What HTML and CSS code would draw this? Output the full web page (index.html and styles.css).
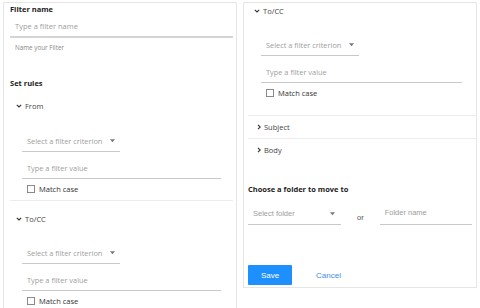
FILE: index.html
```html
<!DOCTYPE html>
<html>
<head>
<meta charset="utf-8">
<link rel="stylesheet" href="styles.css">
</head>
<body>
<div class="page">
  <section class="panel left">
    <div class="heading">Filter name</div>
    <div class="field name-field"><span class="ph">Type a filter name</span></div>
    <div class="hint">Name your Filter</div>
    <div class="heading rules">Set rules</div>

    <div class="rule from">
      <div class="rule-head"><svg class="chev" viewBox="0 0 6 6"><polyline points="0.8,1.8 3,4 5.2,1.8"/></svg><span>From</span></div>
      <div class="rule-body">
        <div class="field select"><span class="ph">Select a filter criterion</span><svg class="tri" viewBox="0 0 6 4"><polygon points="0,0 6,0 3,3.5"/></svg></div>
        <div class="field value"><span class="ph">Type a filter value</span></div>
        <label class="check"><span class="box"></span><span>Match case</span></label>
      </div>
    </div>

    <div class="rule tocc">
      <div class="rule-head"><svg class="chev" viewBox="0 0 6 6"><polyline points="0.8,1.8 3,4 5.2,1.8"/></svg><span>To/CC</span></div>
      <div class="rule-body">
        <div class="field select"><span class="ph">Select a filter criterion</span><svg class="tri" viewBox="0 0 6 4"><polygon points="0,0 6,0 3,3.5"/></svg></div>
        <div class="field value"><span class="ph">Type a filter value</span></div>
        <label class="check"><span class="box"></span><span>Match case</span></label>
      </div>
    </div>
  </section>

  <section class="panel right">
    <div class="rule top">
      <div class="rule-head"><svg class="chev" viewBox="0 0 6 6"><polyline points="0.8,1.8 3,4 5.2,1.8"/></svg><span>To/CC</span></div>
      <div class="rule-body">
        <div class="field select"><span class="ph">Select a filter criterion</span><svg class="tri" viewBox="0 0 6 4"><polygon points="0,0 6,0 3,3.5"/></svg></div>
        <div class="field value"><span class="ph">Type a filter value</span></div>
        <label class="check"><span class="box"></span><span>Match case</span></label>
      </div>
    </div>
    <div class="collapsed"><svg class="chev" viewBox="0 0 6 6"><polyline points="2,0.8 4.2,3 2,5.2"/></svg><span>Subject</span></div>
    <div class="collapsed"><svg class="chev" viewBox="0 0 6 6"><polyline points="2,0.8 4.2,3 2,5.2"/></svg><span>Body</span></div>

    <div class="heading folder-title">Choose a folder to move to</div>
    <div class="folder-row">
      <div class="field folder-select"><span class="ph">Select folder</span><svg class="tri" viewBox="0 0 6 4"><polygon points="0,0 6,0 3,3.5"/></svg></div>
      <span class="or">or</span>
      <div class="field folder-name"><span class="ph">Folder name</span></div>
    </div>
    <div class="actions">
      <button class="save">Save</button>
      <button class="cancel">Cancel</button>
    </div>
  </section>
</div>
</body>
</html>
```
FILE: styles.css
```css
* { box-sizing: border-box; }
html, body { margin: 0; padding: 0; background: #fff; }
body {
  font-family: "Open Sans", "Noto Sans", sans-serif;
  font-size: 7.5px;
  color: #333;
  overflow: hidden;
  height: 308px;
  white-space: nowrap;
}
.page {
  display: flex;
  align-items: flex-start;
  padding: 2px 0 0 3px;
  gap: 6px;
}
.panel {
  border: 1px solid #e6e6e6;
  background: #fff;
}
.left {
  width: 234px;
  height: 320px;
  padding: 0 3px 0 6px;
}
.right {
  width: 234px;
  height: 286px;
  padding: 0 0 0 4px;
}
.heading {
  font-weight: 700;
  font-size: 7.5px;
  line-height: 12px;
  color: #222;
}
.field {
  display: flex;
  align-items: center;
  line-height: 12px;
  border-bottom: 1px solid #c9c9c9;
  padding: 0 0 4px 5px;
}
.ph { color: #9e9e9e; font-size: 7.4px; }
.name-field { margin-top: 5px; padding-bottom: 4px; border-bottom: 2px solid #d4d4d4; }
.name-field .ph { font-size: 7.5px; }
.hint { margin-top: 5px; font-size: 6.3px; line-height: 10px; color: #888; padding-left: 5px; }
.rules { margin-top: 24px; }

.rule-head, .collapsed {
  display: flex;
  align-items: center;
  line-height: 12px;
  color: #444;
  font-size: 7.5px;
}
.rule-head { padding-left: 6px; }
.chev {
  width: 6px; height: 6px;
  margin-right: 3px;
  fill: none; stroke: #333; stroke-width: 1.1;
}
.rule-body { padding-left: 12px; }
.select { width: 98px; margin-top: 23px; }
.tri { width: 5px; height: 4px; fill: #777; margin-left: 8px; }
.value { width: 199px; margin-top: 10px; }
.check {
  display: flex;
  align-items: center;
  margin-top: 4px;
  padding-left: 5px;
  line-height: 12px;
  color: #333;
}
.box {
  width: 8px; height: 8px;
  border: 1px solid #8a8a8a;
  margin-right: 4px;
  background: #fff;
}
.from .rule-head { margin-top: 11px; }
.from .check { padding-bottom: 5px; }
.tocc { border-top: 1px solid #ececec; }
.tocc .rule-head { margin-top: 12px; }
.tocc .select { margin-top: 22px; }

.right .rule-head { margin-top: 2px; padding-left: 6px; }
.right .select { margin-top: 22px; }
.right .value { width: 201px; }
.right .rule-body { padding-left: 13px; }
.right .top .check { padding-bottom: 16px; }
.collapsed {
  border-top: 1px solid #ececec;
  padding: 5px 0 5px 8px;
}
.collapsed .chev { margin-right: 2px; }
.folder-title { margin-top: 22px; }
.folder-row {
  display: flex;
  align-items: flex-end;
  margin-top: 12px;
  font-family: "Liberation Sans", Arial, sans-serif;
}
.folder-select { width: 93px; justify-content: space-between; padding: 0 6px 4px 5px; }
.folder-select .tri { margin-left: 0; }
.folder-row .ph { font-size: 7.5px; }
.or { margin: 0 16px 3px 16px; color: #555; font-size: 7.5px; }
.folder-name { width: 92px; padding-bottom: 5px; }
.actions {
  display: flex;
  align-items: center;
  margin-top: 40px;
}
button {
  font-family: "Liberation Sans", Arial, sans-serif;
  font-size: 8px;
  border: none;
  cursor: pointer;
}
.save {
  width: 44px; height: 20px;
  background: #1e8fff;
  color: #fff;
  border-radius: 1px;
}
.cancel {
  background: none;
  color: #3d8ee6;
  margin-left: 24px;
  padding: 0;
}
```
